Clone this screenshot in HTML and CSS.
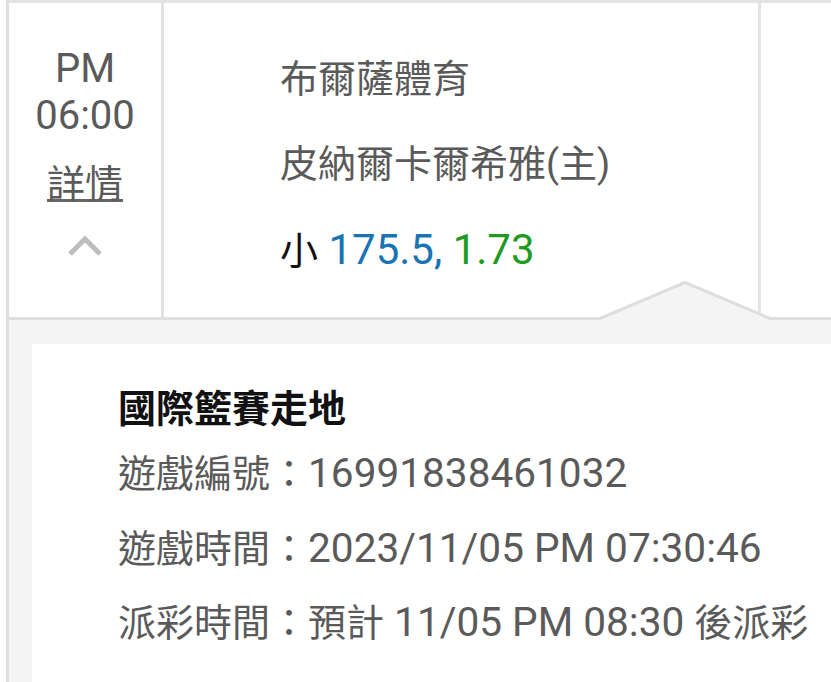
FILE: index.html
```html
<!DOCTYPE html>
<html lang="zh-Hant">
<head>
<meta charset="utf-8">
<link rel="stylesheet" href="styles.css">
</head>
<body>
<div class="wrap">
  <div class="row">
    <div class="col-time">
      <div class="ampm">PM</div>
      <div class="clock">06:00</div>
      <a class="detail-link zh">詳情</a>
      <svg class="chevron" width="36" height="22" viewBox="0 0 36 22"><polyline points="3,19 18,4 33,19" fill="none" stroke="#bdbdbd" stroke-width="5"/></svg>
    </div>
    <div class="col-main">
      <div class="line zh">布爾薩體育</div>
      <div class="line zh">皮納爾卡爾希雅(主)</div>
      <div class="line bet"><span class="pick zh">小</span> <span class="hdp">175.5,</span> <span class="odds">1.73</span></div>
    </div>
    <div class="col-side"></div>
    <svg class="notch" width="170" height="40" viewBox="0 0 170 40">
      <polygon points="0,40 85,3 170,40" fill="#f4f4f4"/>
      <polyline points="0,38.5 85,2.5 170,38.5" fill="none" stroke="#dedede" stroke-width="3"/>
    </svg>
  </div>
  <div class="panel">
    <div class="card">
      <div class="title zh">國際籃賽走地</div>
      <div class="info"><span class="zh">遊戲編號：</span>16991838461032</div>
      <div class="info"><span class="zh">遊戲時間：</span>2023/11/05 PM 07:30:46</div>
      <div class="info"><span class="zh">派彩時間：預計</span> 11/05 PM 08:30 <span class="zh">後派彩</span></div>
    </div>
  </div>
</div>
</body>
</html>
```

FILE: styles.css
```css
html, body {
  margin: 0;
  padding: 0;
  background: #ffffff;
  font-family: Roboto, "Noto Sans CJK TC", sans-serif;
  font-size: 40.6px;
  color: #5a5a5a;
  overflow: hidden;
}
.zh {
  font-size: 38px;
}
.wrap {
  margin-left: 6px;
  border-left: 3px solid #e0e0e0;
  border-top: 3px solid #e3e3e3;
  height: 679px;
  display: flex;
  flex-direction: column;
}
.row {
  position: relative;
  display: flex;
  height: 314px;
  border-bottom: 3px solid #dedede;
  background: #fff;
}
.col-time {
  width: 152px;
  border-right: 3px solid #e2e2e2;
  display: flex;
  flex-direction: column;
  align-items: center;
  padding-top: 42px;
  box-sizing: content-box;
}
.ampm, .clock {
  font-size: 40px;
  line-height: 47px;
}
.detail-link {
  margin-top: 23px;
  line-height: 44px;
  text-decoration: underline;
  text-decoration-thickness: 3px;
  text-underline-offset: 2px;
  text-decoration-color: #666;
}
.chevron {
  margin-top: 29px;
  display: block;
}
.col-main {
  border-right: 3px solid #e2e2e2;
  padding-top: 34px;
  padding-left: 116px;
  box-sizing: border-box;
  width: 597px;
}
.line {
  line-height: 85px;
  white-space: nowrap;
}
.bet {
  font-size: 42px;
}
.pick { color: #111; }
.hdp { color: #1a74b3; }
.odds { color: #1f9a20; }
.col-side {
  flex: 1;
}
.notch {
  position: absolute;
  left: 591px;
  top: 277px;
  display: block;
}
.panel {
  flex: 1;
  background: #f4f4f4;
  padding: 24px 0 0 23px;
  display: flex;
}
.card {
  flex: 1;
  background: #fff;
  padding: 40px 0 0 86px;
}
.title {
  font-weight: 700;
  color: #111;
  line-height: 50px;
  margin-bottom: 3px;
}
.info {
  line-height: 73.5px;
  white-space: nowrap;
}
```
